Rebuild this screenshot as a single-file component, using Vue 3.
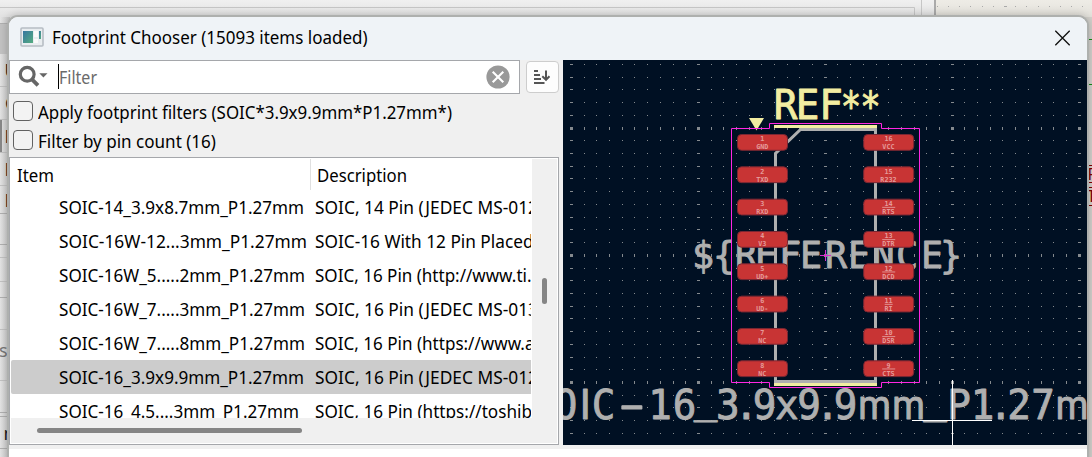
<script setup>
const rows = [
  { y: 0, item: 'SOIC-14_3.9x8.7mm_P1.27mm', w: 245, desc: 'SOIC, 14 Pin (JEDEC MS-012', dw: 223 },
  { y: 1, item: 'SOIC-16W-12...3mm_P1.27mm', w: 248, desc: 'SOIC-16 With 12 Pin Placed', dw: 218.5 },
  { y: 2, item: 'SOIC-16W_5.....2mm_P1.27mm', w: 246, desc: 'SOIC, 16 Pin (http://www.ti.', dw: 216.5 },
  { y: 3, item: 'SOIC-16W_7.....3mm_P1.27mm', w: 246, desc: 'SOIC, 16 Pin (JEDEC MS-013', dw: 223 },
  { y: 4, item: 'SOIC-16W_7.....8mm_P1.27mm', w: 246, desc: 'SOIC, 16 Pin (https://www.a', dw: 219.5 },
  { y: 5, item: 'SOIC-16_3.9x9.9mm_P1.27mm', w: 245, desc: 'SOIC, 16 Pin (JEDEC MS-012', dw: 223, selected: true },
  { y: 6, item: 'SOIC-16_4.5....3mm_P1.27mm', w: 240, desc: 'SOIC, 16 Pin (https://toshib', dw: 217 },
]

const leftNames = ['GND', 'TXD', 'RXD', 'V3', 'UD+', 'UD-', 'NC', 'NC']
const rightNames = ['VCC', 'R232', 'RTS', 'DTR', 'DCD', 'RI', 'DSR', 'CTS']
const pads = []
for (let i = 0; i < 8; i++) {
  const y = 134 + i * 32.33
  pads.push({ x: 737, y, num: i + 1, name: leftNames[i], bar: false })
  pads.push({ x: 863.2, y, num: 16 - i, name: rightNames[i], bar: i > 1 })
}

const dots = []
for (let i = 0; i <= 40; i++) {
  for (let j = 0; j <= 30; j++) {
    const x = Math.round(571 + i * 12.69)
    const y = Math.round(64 + j * 12.72)
    const mx = i % 10 === 0
    const my = j % 10 === 5
    dots.push({ x: mx ? x - 1 : x, y: my ? y - 1 : y, w: mx ? 3 : 1, h: my ? 3 : 1 })
  }
}

const kinds = { m: 'wide', I: 'bar' }
const stretch = { '-': 1.9, _: 0.98, '*': 0.85, m: 0.93 }
const shift = { _: -7, '-': 0.5, '*': 1.5 }
const glyphs = (text, xs) => [...text].map((c, i) => ({
  c, x: xs[i], dy: shift[c] || 0, sx: stretch[c] || 0.98, kind: kinds[c] || 'mono',
}))
const value = glyphs('OIC-16_3.9x9.9mm_P1.27m', [
  565.5, 585.3, 603.5, 632, 660, 684.5, 705.5, 727.7, 746.3, 764.5, 786.7, 809, 827.5, 845.5,
  874.5, 908.5, 935, 959, 982.5, 1000.7, 1019, 1043, 1072,
])
const refText = glyphs('REF**', [785.5, 807.5, 831, 851, 870.5])
const fabRef = glyphs('${REFERENCE}', [703, 724, 746, 766, 790, 811, 836, 859, 883.5, 907, 932, 951])
const place = (g, y) => `translate(${g.x} ${y + g.dy}) scale(${g.sx} 1)`
</script>

<template>
  <div class="desktop">
    <svg class="behind" width="1092" height="457" viewBox="0 0 1092 457">
      <defs>
        <linearGradient id="topShade" x1="0" y1="0" x2="0" y2="1">
          <stop offset="0" stop-color="#f0f0f0" /><stop offset="1" stop-color="#dcdcdc" />
        </linearGradient>
        <linearGradient id="sideShade" x1="0" y1="0" x2="1" y2="0">
          <stop offset="0" stop-color="#e4e4e4" /><stop offset="1" stop-color="#c6c6c6" />
        </linearGradient>
        <linearGradient id="sheetShade" x1="0" y1="0" x2="0" y2="1">
          <stop offset="0" stop-color="#eeece6" /><stop offset="1" stop-color="#dedcd6" />
        </linearGradient>
      </defs>
      <rect width="936" height="24" fill="url(#topShade)" />
      <rect y="17" width="10" height="440" fill="url(#sideShade)" />
      <path d="M0 7.5H914.5V17M921.5 0V17" fill="none" stroke="#c6c6c6" />
      <path d="M0 23.5H9M0 213.5H8V244.5H0M0 297.5H9M0 412.5H9M0 416.5H9M0 448.5H9" fill="none" stroke="#b0b0b0" />
      <path d="M0 86.5H9M0 119.5H9M0 152.5H9M0 185.5H9M0 257.5H9M0 281.5H9M0 329.5H9M0 380.5H9" fill="none" stroke="#c2c2c2" />
      <rect y="24" width="8" height="30" fill="#c3c3c3" />
      <rect y="120" width="2" height="32" fill="#888" />
      <g class="peek">
        <text x="4.5" y="77">U</text><text x="5" y="110">C</text><text x="4.5" y="143">F</text>
        <text x="4.5" y="176">H</text><text x="4.5" y="207">L</text>
        <text x="-1" y="357" class="dim">sy</text><text x="3.5" y="440">n</text>
      </g>
      <rect x="936" width="156" height="24" fill="url(#sheetShade)" />
      <rect x="1085" y="17" width="7" height="440" fill="#d3d1cc" />
      <rect x="934" width="2" height="17" fill="#aaa" />
      <g fill="#aaa"><rect v-for="n in 14" :key="n" :x="Math.round(925.5 + n * 11.2)" y="6" :width="n === 7 ? 3 : 1" height="1" /></g>
      <path d="M1087 39.5H1092M1087 84.5H1092" stroke="#168a16" />
      <path d="M1087 165.5H1092M1087 182.5H1092M1087 187.5H1092M1087 205.5H1092" stroke="#800000" />
      <g class="netname"><text x="1088" y="180">R</text><text x="1087" y="202">T</text></g>
    </svg>

    <section class="window">
      <header class="titlebar">
        <svg class="appicon" width="24" height="20" viewBox="0 0 24 20">
          <defs><linearGradient id="mapFill" x1="0" y1="0" x2="1" y2="1"><stop stop-color="#3675a0" /><stop offset="1" stop-color="#55ad80" /></linearGradient></defs>
          <rect x="1" y="1" width="22" height="18" rx="1" fill="#e9edf0" stroke="#b7bdc4" stroke-width="1.6" />
          <rect x="3" y="4" width="10" height="12" fill="url(#mapFill)" />
          <rect x="14" y="4" width="4" height="6" fill="#fafafa" /><rect x="14" y="12" width="4" height="4" fill="#fafafa" />
          <rect x="19" y="4" width="2" height="8" fill="url(#mapFill)" />
        </svg>
        <svg class="label title" width="330" height="30"><text x="0" y="20" textLength="315.5" lengthAdjust="spacingAndGlyphs">Footprint Chooser (15093 items loaded)</text></svg>
        <svg class="close" width="17" height="16" viewBox="0 0 17 16"><path d="M1.3.8 15.7 15.2M15.7.8 1.3 15.2" stroke="#111" stroke-width="1.35" /></svg>
      </header>

      <div class="body">
        <div class="chooser">
          <div class="searchrow">
            <div class="search">
              <svg class="lens" width="31" height="24" viewBox="0 0 31 24">
                <circle cx="9.2" cy="9.3" r="6.9" fill="none" stroke="#666" stroke-width="3.2" />
                <path d="M14 14.3 20 20.3" stroke="#666" stroke-width="3.8" />
                <path d="M21.3 8.3H29.5L25.4 12.6Z" fill="#666" />
              </svg>
              <i class="caret"></i>
              <svg class="label hint" width="60" height="30"><text x="0" y="20" textLength="38" lengthAdjust="spacingAndGlyphs">Filter</text></svg>
              <svg class="clear" width="24" height="24" viewBox="0 0 24 24"><circle cx="12" cy="12" r="11.6" fill="#999" /><path d="M6.7 6.7 17.3 17.3M17.3 6.7 6.7 17.3" stroke="#fff" stroke-width="2.1" /></svg>
            </div>
            <div class="sort">
              <svg width="18" height="16" viewBox="0 0 18 16">
                <path d="M1 2H5M1 6H7M1 10H8M1 14H11.5" stroke="#555" stroke-width="1.8" />
                <path d="M13 1.5V10.5M9.3 7.3 13 10.8 16.5 7.3" fill="none" stroke="#555" stroke-width="2" />
              </svg>
            </div>
          </div>
          <div class="check"><i class="box"></i><svg class="label" width="430" height="29"><text x="0" y="21.5" textLength="414" lengthAdjust="spacingAndGlyphs">Apply footprint filters (SOIC*3.9x9.9mm*P1.27mm*)</text></svg></div>
          <div class="check"><i class="box"></i><svg class="label" width="430" height="29"><text x="0" y="21.5" textLength="178" lengthAdjust="spacingAndGlyphs">Filter by pin count (16)</text></svg></div>

          <div class="table">
            <div class="viewport">
              <div class="head">
                <div class="hcell first"><svg class="label" width="100" height="31"><text x="6" y="23" textLength="37" lengthAdjust="spacingAndGlyphs">Item</text></svg></div>
                <div class="hcell"><svg class="label" width="200" height="31"><text x="6" y="23" textLength="90" lengthAdjust="spacingAndGlyphs">Description</text></svg></div>
              </div>
              <div class="rows">
                <div v-for="r in rows" :key="r.y" class="row" :class="{ selected: r.selected }">
                  <svg class="label name" width="304" height="34"><text x="48" y="24" :textLength="r.w" lengthAdjust="spacingAndGlyphs">{{ r.item }}</text></svg>
                  <svg class="label" width="216" height="34"><text x="0" y="24" :textLength="r.dw" lengthAdjust="spacingAndGlyphs">{{ r.desc }}</text></svg>
                </div>
              </div>
            </div>
            <div class="vbar"><i></i></div>
            <div class="hbar"><i></i></div>
          </div>
        </div>

        <svg class="canvas" width="524" height="385" viewBox="563 60 524 385">
          <rect x="563" y="60" width="524" height="385" fill="#001023" />
          <g fill="#858a8e" shape-rendering="crispEdges">
            <rect v-for="(d, i) in dots" :key="i" :x="d.x" :y="d.y" :width="d.w" :height="d.h" />
          </g>
          <path d="M775.5 383V153.5L800.5 129.5H875.5V381.5H774" fill="none" stroke="#afafaf" stroke-width="3" />
          <g class="stroke-text fab">
            <text v-for="(g, i) in fabRef" :key="i" :transform="place(g, 268)" class="mono small">{{ g.c }}</text>
            <text v-for="(g, i) in value" :key="'v' + i" :transform="place(g, 418.8)" :class="g.kind">{{ g.c }}</text>
          </g>
          <g fill="#c83434" stroke="#7a2733">
            <rect v-for="(p, i) in pads" :key="i" :x="p.x + .5" :y="p.y + .5" width="50" height="15.8" rx="4" />
          </g>
          <g class="pad-text">
            <template v-for="(p, i) in pads" :key="i">
              <text :x="p.x + 25.3" :y="p.y + 7.2">{{ p.num }}</text>
              <text :x="p.x + 25.3" :y="p.y + 15.2">{{ p.name }}</text>
              <rect v-if="p.bar" :x="p.x + (p.name === 'RI' ? 21.5 : 19)" :y="p.y + 8.2" :width="p.name === 'RI' ? 8 : 13" height=".9" />
            </template>
          </g>
          <path d="M774 126.5H877M774 384.5H877" stroke="#f2eda1" stroke-width="3" />
          <path d="M749 118H764L756.5 130.5Z" fill="#f2eda1" />
          <g class="stroke-text silk">
            <text v-for="(g, i) in refText" :key="i" :transform="place(g, 119)" class="mono">{{ g.c }}</text>
          </g>
          <path d="M731.5 128.5H769.5V123.5H881.5V128.5H919.5V382.5H881.5V387.5H769.5V382.5H731.5Z" fill="none" stroke="#ff26e2" />
          <path d="M820 255.5H831M825.5 250V261" stroke="#d92bd0" />
          <path d="M912 420.5H992M952.5 380V445" stroke="#fff" />
        </svg>
      </div>
      <div class="gutter"></div>
    </section>
  </div>
</template>

<style>
html, body { margin: 0; overflow: hidden; }
</style>

<style scoped>
.desktop { position: relative; width: 1092px; height: 457px; overflow: hidden; background: #ddd; }
.behind { position: absolute; left: 0; top: 0; }
.peek { font: 18px "Noto Sans", sans-serif; fill: #222; }
.peek .dim { fill: #777; }
.netname { font: 15px "DejaVu Sans Mono", monospace; fill: #800000; }
.window { position: absolute; left: 7px; top: 15px; width: 1078px; height: 460px; border: 2px solid #aeb0ae; border-radius: 11px 11px 0 0; background: #fff; overflow: hidden; box-shadow: 0 0 9px rgba(0, 0, 0, .22); }
.titlebar { height: 43px; background: #eff3f7; display: flex; align-items: flex-start; }
.appicon { margin: 10px 0 0 11px; flex: none; }
.label { display: block; flex: none; font: 17.8px "Noto Sans", "Open Sans", sans-serif; fill: #000; overflow: hidden; }
.title { margin: 7px 0 0 8px; }
.close { margin: 13px 16px 0 auto; }
.body { display: flex; width: 1078px; height: 385px; background: #f0f0f0; }
.chooser { width: 554px; flex: none; display: flex; flex-direction: column; }
.canvas { display: block; flex: none; }
.searchrow { display: flex; align-items: flex-start; height: 37px; }
.search { box-sizing: border-box; width: 511px; height: 34px; border: 1px solid #a5a7ab; background: #fff; display: flex; align-items: flex-start; }
.lens { margin: 4px 0 0 8px; }
.caret { width: 1px; height: 25px; margin: 3px 0 0 9px; background: #000; }
.hint { fill: #6b6b6b; margin-top: 3px; }
.clear { margin: 4px 9px 0 auto; }
.sort { box-sizing: border-box; width: 33px; height: 32px; margin: 1px 0 0 6px; border: 1px solid #cdcdcd; border-radius: 4px; background: #fdfdfd; display: flex; align-items: center; justify-content: center; }
.sort svg { margin-right: 2px; }
.check { height: 29px; display: flex; align-items: flex-start; padding-left: 4px; }
.box { box-sizing: border-box; width: 20px; height: 20px; margin: 4px 5px 0 0; border: 1px solid #626262; border-radius: 4px; background: #f3f3f3; }
.table { box-sizing: border-box; margin-top: 2px; width: 550px; height: 288px; border: 1px solid #a5a7ab; padding: 1px; background: #fff; display: grid; grid-template-columns: 521px 25px; grid-template-rows: 259px 25px; }
.viewport { overflow: hidden; }
.head { display: flex; height: 31px; }
.hcell.first { box-sizing: border-box; width: 300px; border-right: 1px solid #e0e0e0; }
.rows { display: flex; flex-direction: column; }
.row { flex: none; height: 34px; width: 520px; display: flex; overflow: hidden; }
.row.selected { background: #ccc; border-radius: 2px 0 0 2px; }
.vbar, .hbar { background: #f0f0f0; }
.vbar i { display: block; width: 5px; height: 26px; margin: 119px 0 0 10px; border-radius: 3px; background: #858585; }
.hbar { grid-column: 1 / 3; }
.hbar i { display: block; width: 265px; height: 5px; margin: 10px 0 0 26px; border-radius: 3px; background: #858585; }
.gutter { height: 4px; background: #f0f0f0; }
.stroke-text text { text-anchor: middle; stroke-linejoin: round; stroke-width: .9px; }
.fab { fill: #afafaf; stroke: #afafaf; }
.silk { fill: #f2eda1; stroke: #f2eda1; }
.mono { font: 40px "DejaVu Sans Mono", monospace; }
.mono.small { font-size: 37.5px; }
.wide { font: 40px Roboto, sans-serif; }
.bar { font: 40px "DejaVu Sans", sans-serif; }
.pad-text { font: bold 6.8px "DejaVu Sans Mono", monospace; fill: #e59a9a; }
.pad-text text { text-anchor: middle; }
</style>
